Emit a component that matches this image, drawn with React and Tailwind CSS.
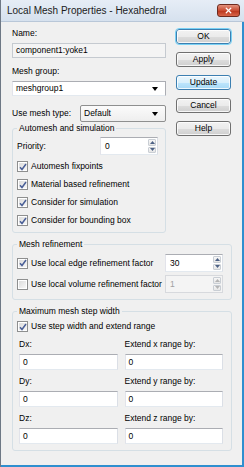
import { X } from 'lucide-react';

const btnBase =
  'h-[15px] w-[55px] rounded-[3px] border flex items-center justify-center leading-none shadow-[inset_0_0_0_1px_rgba(255,255,255,0.8)]';

function Button({ label, kind }) {
  let cls = 'border-[#707070] bg-[linear-gradient(#f2f2f2_0%,#ebebeb_50%,#dddddd_51%,#cfcfcf_100%)]';
  if (kind === 'default') cls = 'border-[#3c7fb1] bg-[linear-gradient(#f2f2f2_0%,#ebebeb_50%,#dddddd_51%,#cfcfcf_100%)] outline outline-1 outline-[#7ad1f4]';
  if (kind === 'hover') cls = 'border-[#3c7fb1] bg-[linear-gradient(#eaf6fd_0%,#d9f0fc_50%,#bee6fd_51%,#a7d9f5_100%)]';
  return <div className={`${btnBase} ${cls}`}>{label}</div>;
}

function Checkbox({ checked, label }) {
  return (
    <div className="flex items-center h-[13px]">
      <span className="w-[11px] h-[11px] border border-[#8e8f8f] bg-white p-[1px] flex">
        <span className="flex-1 bg-[linear-gradient(135deg,#dcdcdc,#f7f7f7)] flex items-center justify-center">
          {checked && (
            <svg width="8" height="8" viewBox="0 0 8 8">
              <path d="M1 4.2 L3 6.5 L7 1" stroke="#4a5f97" strokeWidth="1.5" fill="none" />
            </svg>
          )}
        </span>
      </span>
      <span className="ml-[3px]">{label}</span>
    </div>
  );
}

function Arrow({ up, color = '#4d6185' }) {
  return (
    <svg width="5" height="3" viewBox="0 0 5 3">
      <path d={up ? 'M0 3 L2.5 0 L5 3 Z' : 'M0 0 L2.5 3 L5 0 Z'} fill={color} />
    </svg>
  );
}

function Spin({ value, disabled, w = 'w-[58px]' }) {
  return (
    <div
      className={`flex h-[18px] ${w} ml-auto border ${
        disabled
          ? 'border-[#d7d9dd] bg-[#f4f4f4] text-[#a0a0a0]'
          : 'border-[#abadb3] border-l-[#e2e3ea] border-r-[#dbdfe6] border-b-[#e3e9ef] bg-white'
      }`}
    >
      <span className="flex-1 flex items-center pl-[4px]">{value}</span>
      <div className="w-[10px] flex flex-col p-[1px] gap-[1px]">
        <span className="flex-1 flex items-center justify-center border border-[#c9ced4] rounded-[1px] bg-[linear-gradient(#f7f7f7,#e6e6e6)]">
          <Arrow up color={disabled ? '#b4b4b4' : '#4d6185'} />
        </span>
        <span className="flex-1 flex items-center justify-center border border-[#c9ced4] rounded-[1px] bg-[linear-gradient(#f7f7f7,#e6e6e6)]">
          <Arrow color={disabled ? '#b4b4b4' : '#4d6185'} />
        </span>
      </div>
    </div>
  );
}

function Dropdown({ value, className }) {
  return (
    <div className={`flex items-center border border-[#abadb3] border-b-[#e3e9ef] border-l-[#e2e3ea] bg-white pl-[3px] pr-[7px] ${className}`}>
      <span className="flex-1">{value}</span>
      <svg width="6" height="4" viewBox="0 0 6 4">
        <path d="M0 0 L6 0 L3 4 Z" fill="#000" />
      </svg>
    </div>
  );
}

function TextBox({ value, className = 'h-[16px]' }) {
  return (
    <div className={`flex items-center border border-[#abadb3] border-l-[#e2e3ea] border-r-[#dbdfe6] border-b-[#e3e9ef] bg-white pl-[3px] ${className}`}>
      {value}
    </div>
  );
}

function Group({ title, className, children }) {
  return (
    <fieldset className={`border border-[#d5dfe5] rounded-[3px] ${className}`}>
      <legend className="px-[2px] h-[11px] leading-[11px]">{title}</legend>
      {children}
    </fieldset>
  );
}

export default function App() {
  const ranges = ['x', 'y', 'z'];

  return (
    <div className="w-[244px] h-[467px] flex flex-col border-l border-[#6e7885] font-['Liberation_Sans',Arial,sans-serif] text-[8.5px] text-black">
      {/* title bar */}
      <div className="h-[22px] flex items-center pl-[6px] pr-[4px] bg-[linear-gradient(#e6edf6,#d6e1ee)] border-b border-[#b9c7d8]">
        <span className="flex-1 text-[10px] text-[#1b1b1b]">Local Mesh Properties - Hexahedral</span>
        <div className="w-[23px] h-[13px] rounded-[3px] border border-[#6d2a1f] bg-[linear-gradient(#e2917d,#c94d34_50%,#b8331b_51%,#d8664a)] flex items-center justify-center">
          <X size={9} strokeWidth={3.5} color="#ffffff" />
        </div>
      </div>

      {/* body */}
      <div className="flex-1 flex flex-col bg-[#f0f0f0] border-r-2 border-b-2 border-[#2f8fcf] pl-[11px] pr-[10px]">
        <div className="flex">
          <div className="w-[154px] flex flex-col pt-[6px]">
            <div className="h-[11px] leading-[11px]">Name:</div>
            <div className="mt-[4px] h-[15px] flex items-center border border-[#c5cad0] bg-[#f4f4f4] pl-[3px]">component1:yoke1</div>
            <div className="mt-[8px] h-[11px] leading-[11px]">Mesh group:</div>
            <Dropdown value="meshgroup1" className="mt-[4px] h-[15px]" />
            <div className="mt-[9px] h-[17px] flex items-center">
              <span className="flex-1">Use mesh type:</span>
              <div className="w-[86px] h-[17px] flex items-center border border-[#8e8f8f] rounded-[2px] bg-[linear-gradient(#fbfbfb,#eeeeee)] pl-[3px] pr-[7px]">
                <span className="flex-1">Default</span>
                <svg width="6" height="4" viewBox="0 0 6 4">
                  <path d="M0 0 L6 0 L3 4 Z" fill="#000" />
                </svg>
              </div>
            </div>
            <Group title="Automesh and simulation" className="mt-[1px] pl-[4px] pr-[7px] pb-[5px]">
              <div className="mt-[3px] h-[18px] flex items-center">
                <span>Priority:</span>
                <Spin value="0" />
              </div>
              <div className="mt-[5px] flex flex-col gap-[5px]">
                <Checkbox checked label="Automesh fixpoints" />
                <Checkbox checked label="Material based refinement" />
                <Checkbox checked label="Consider for simulation" />
                <Checkbox checked label="Consider for bounding box" />
              </div>
            </Group>
          </div>

          <div className="ml-[10px] pt-[7px] flex flex-col gap-[8px]">
            <Button label="OK" kind="default" />
            <Button label="Apply" />
            <Button label="Update" kind="hover" />
            <Button label="Cancel" />
            <Button label="Help" />
          </div>
        </div>

        <Group title="Mesh refinement" className="mt-[6px] pl-[4px] pr-[8px] pb-[6px]">
          <div className="mt-[4px] h-[18px] flex items-center">
            <Checkbox checked label="Use local edge refinement factor" />
            <Spin value="30" />
          </div>
          <div className="mt-[3px] h-[18px] flex items-center">
            <Checkbox label="Use local volume refinement factor" />
            <Spin value="1" disabled />
          </div>
        </Group>

        <Group title="Maximum mesh step width" className="mt-[6px] pl-[4px] pr-[8px] pb-[6px]">
          <div className="mt-[3px]">
            <Checkbox checked label="Use step width and extend range" />
          </div>
          <div className="grid grid-cols-2 gap-x-[7px] pl-[2px]">
            {ranges.map((r) => (
              <div key={r} className="contents">
                <div className="mt-[6px] h-[11px] leading-[11px]">D{r}:</div>
                <div className="mt-[6px] h-[11px] leading-[11px]">Extend {r} range by:</div>
                <TextBox value="0" className="mt-[4px] h-[16px]" />
                <TextBox value="0" className="mt-[4px] h-[16px]" />
              </div>
            ))}
          </div>
        </Group>
      </div>
    </div>
  );
}
